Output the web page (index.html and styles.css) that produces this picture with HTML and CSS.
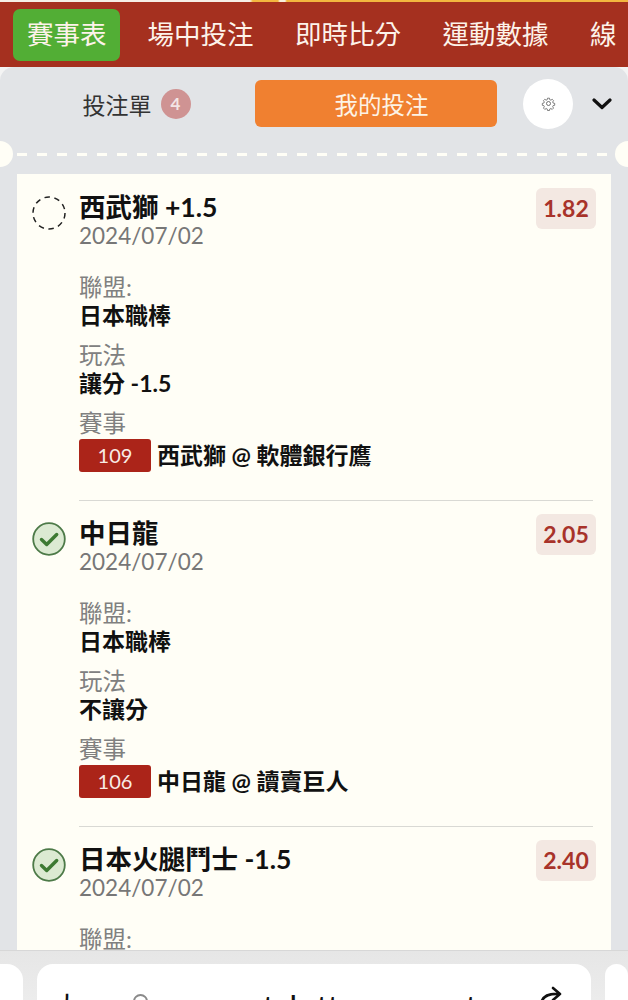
FILE: index.html
```html
<!DOCTYPE html>
<html lang="zh-Hant">
<head>
<meta charset="utf-8">
<title>投注單</title>
<link rel="stylesheet" href="styles.css">
</head>
<body>
<div class="screen">
  <nav class="nav">
    <a class="nav-item active">賽事表</a>
    <a class="nav-item">場中投注</a>
    <a class="nav-item">即時比分</a>
    <a class="nav-item">運動數據</a>
    <a class="nav-item">線</a>
  </nav>
  <main class="panel">
    <div class="tabs">
      <div class="tab-slip"><span>投注單</span><span class="count">4</span></div>
      <button class="my-bets">我的投注</button>
      <span class="gear">
        <svg viewBox="0 0 24 24" width="15" height="15" fill="none" stroke="#555" stroke-width="1.3"><circle cx="12" cy="12" r="3.2"/><path d="M10.3 2.5h3.4l.6 2.8 1.9.8 2.4-1.6 2.4 2.4-1.6 2.4.8 1.9 2.8.6v3.4l-2.8.6-.8 1.9 1.6 2.4-2.4 2.4-2.4-1.6-1.9.8-.6 2.8h-3.4l-.6-2.8-1.9-.8-2.4 1.6-2.4-2.4 1.6-2.4-.8-1.9-2.8-.6v-3.4l2.8-.6.8-1.9-1.6-2.4 2.4-2.4 2.4 1.6 1.9-.8z" transform="translate(1.2 1.2) scale(.9)"/></svg>
      </span>
      <svg class="chev" viewBox="0 0 20 12" width="20" height="12" fill="none" stroke="#111" stroke-width="3.2" stroke-linecap="round" stroke-linejoin="round"><path d="M2 2l8 7.5 8-7.5"/></svg>
    </div>
    <div class="perforation"><i class="notch left"></i><i class="dashes"></i><i class="notch right"></i></div>
    <section class="slip">
      <article class="bet">
        <svg class="mark" viewBox="0 0 34 34" width="34" height="34"><circle cx="17" cy="17" r="16" fill="none" stroke="#222" stroke-width="1.5" stroke-dasharray="5.5 4.55"/></svg>
        <div class="body">
          <div class="head"><div><h2>西武獅 +1.5</h2><time>2024/07/02</time></div><b class="odds">1.82</b></div>
          <dl>
            <dt>聯盟:</dt><dd>日本職棒</dd>
            <dt>玩法</dt><dd>讓分 -1.5</dd>
            <dt>賽事</dt><dd class="match"><span class="code">109</span>西武獅 @ 軟體銀行鷹</dd>
          </dl>
        </div>
      </article>
      <article class="bet">
        <svg class="mark" viewBox="0 0 34 34" width="34" height="34"><circle cx="17" cy="17" r="15.8" fill="#dcead2" stroke="#4d7a48" stroke-width="1.8"/><path d="M9.5 17.5l5.2 5 10-10" fill="none" stroke="#3d7a32" stroke-width="3.4" stroke-linecap="round" stroke-linejoin="round"/></svg>
        <div class="body">
          <div class="head"><div><h2>中日龍</h2><time>2024/07/02</time></div><b class="odds">2.05</b></div>
          <dl>
            <dt>聯盟:</dt><dd>日本職棒</dd>
            <dt>玩法</dt><dd>不讓分</dd>
            <dt>賽事</dt><dd class="match"><span class="code">106</span>中日龍 @ 讀賣巨人</dd>
          </dl>
        </div>
      </article>
      <article class="bet">
        <svg class="mark" viewBox="0 0 34 34" width="34" height="34"><circle cx="17" cy="17" r="15.8" fill="#dcead2" stroke="#4d7a48" stroke-width="1.8"/><path d="M9.5 17.5l5.2 5 10-10" fill="none" stroke="#3d7a32" stroke-width="3.4" stroke-linecap="round" stroke-linejoin="round"/></svg>
        <div class="body">
          <div class="head"><div><h2>日本火腿鬥士 -1.5</h2><time>2024/07/02</time></div><b class="odds">2.40</b></div>
          <dl><dt>聯盟:</dt></dl>
        </div>
      </article>
    </section>
  </main>
  <footer class="browser">
    <div class="tab-card side-left"></div>
    <div class="tab-card address">
      <span class="size">大</span>
      <i class="lock"></i>
      <span class="url">sportslottery.com.tw</span>
      <svg class="reload" viewBox="0 0 26 26" width="26" height="26" fill="none" stroke="#111" stroke-width="2.6" stroke-linecap="round" stroke-linejoin="round"><path d="M3 18C4 11 10 7 22 8M15 2l7 6-7 6"/></svg>
    </div>
    <div class="tab-card side-right"></div>
  </footer>
</div>
</body>
</html>
```
FILE: styles.css
```css
* { box-sizing: border-box; }
html, body { margin: 0; padding: 0; }
body { font-family: "Lato", "Noto Sans CJK TC", sans-serif; background: #f4f4f4; }
.screen { width: 628px; height: 1000px; overflow: hidden; display: flex; flex-direction: column; position: relative; }
.nav { flex: none; height: 67px; background: #a5301f; border-top: 2px solid; border-image: linear-gradient(90deg, #f6efe6 0 250px, #f3b63f 253px 278px, #f8efdc 280px 285px, #f3b63f 287px) 1; display: flex; align-items: center; padding: 0 0 0 13px; overflow: hidden; white-space: nowrap; }
.nav-item { flex: none; color: #fdf3ea; font-size: 26.5px; line-height: 50px; height: 52px; padding: 0 14px; margin-right: 13.5px; border-radius: 7px; }
.nav-item.active { background: #52ae35; width: 107px; padding: 0 0 0 14px; }
.panel { flex: none; height: 883px; background: #e2e4e7; border-radius: 14px 14px 0 0; overflow: hidden; }
.tabs { height: 73px; display: flex; align-items: center; position: relative; padding: 0 16px 0 0; }
.tab-slip { width: 255px; display: flex; justify-content: center; align-items: center; gap: 9px; font-size: 23px; color: #333; padding-left: 18px; }
.count { width: 30px; height: 30px; border-radius: 50%; background: #cf9393; color: #f3e6e6; font-size: 17px; font-weight: 700; display: flex; align-items: center; justify-content: center; }
.my-bets { width: 242px; height: 47px; border: 0; padding: 0 0 0 11px; border-radius: 6px; background: #f08030; color: #fdf3e6; font: inherit; font-size: 23.5px; }
.gear { width: 50px; height: 50px; border-radius: 50%; background: #fff; display: flex; align-items: center; justify-content: center; margin-left: 26px; }
.chev { margin-left: 19px; }
.perforation { height: 26px; margin-top: 1px; display: flex; align-items: center; }
.notch { flex: none; width: 26px; height: 26px; border-radius: 50%; background: #fffef6; }
.notch.left { margin-left: -13px; }
.notch.right { margin-right: -13px; }
.dashes { flex: 1; height: 3px; margin-left: 4px; background: repeating-linear-gradient(90deg, #fffef6 0 10px, transparent 10px 20px); }
.slip { margin: 7px 17px 0 17px; height: 800px; background: #fffef6; padding: 15px 18px 0 15px; }
.bet { display: flex; gap: 13px; }
.mark { flex: none; margin-top: 7px; }
.body { flex: 1; min-width: 0; padding-bottom: 28px; border-bottom: 1px solid #d9d9d4; margin-bottom: 14px; }
.bet:last-child .body { border: 0; }
.head { display: flex; justify-content: space-between; align-items: flex-start; }
h2 { margin: 0; font-size: 26.5px; line-height: 36px; height: 36px; font-weight: 700; color: #111; }
time { display: block; font-size: 22.5px; line-height: 24px; color: #777; margin-top: -1px; }
.odds { font-size: 23px; font-weight: 700; color: #a8332a; background: #f3e8e2; border-radius: 6px; width: 60px; height: 41px; line-height: 41px; text-align: center; margin-right: -3px; margin-top: -1px; }
dl { margin: 25px 0 0; }
dt { font-size: 23.5px; line-height: 28px; color: #808080; margin-top: 12px; height: 28px; }
dd { margin: 0; font-size: 23px; font-weight: 700; line-height: 28px; color: #111; height: 28px; }
.match { display: flex; align-items: center; gap: 6px; height: 34px; line-height: 34px; white-space: nowrap; margin-top: 1px; }
.code { width: 72px; height: 33px; background: #ab2419; border-radius: 3px; color: #f8ebe5; font-weight: 400; font-size: 20px; line-height: 33px; text-align: center; }
.browser { position: absolute; left: 0; right: 0; bottom: 0; height: 50px; background: linear-gradient(#e6e6e6, #ececec); border-top: 1px solid #d7d7d7; display: flex; gap: 14px; padding: 13px 0 0; overflow: hidden; }
.tab-card { background: #fff; border-radius: 16px 16px 0 0; height: 60px; }
.side-left { width: 23px; border-radius: 0 16px 0 0; }
.address { width: 554px; flex: none; position: relative; overflow: hidden; }
.side-right { flex: 1; }
.size { position: absolute; left: 15px; top: 25px; font-size: 30px; line-height: 36px; color: #111; }
.lock { position: absolute; left: 96px; top: 30px; width: 15px; height: 20px; border: 2.5px solid #8a8a8a; border-radius: 8px 8px 0 0; }
.url { position: absolute; left: 160px; top: 24px; font-size: 34px; line-height: 40px; color: #111; white-space: nowrap; }
.reload { position: absolute; left: 501px; top: 22px; }
```
